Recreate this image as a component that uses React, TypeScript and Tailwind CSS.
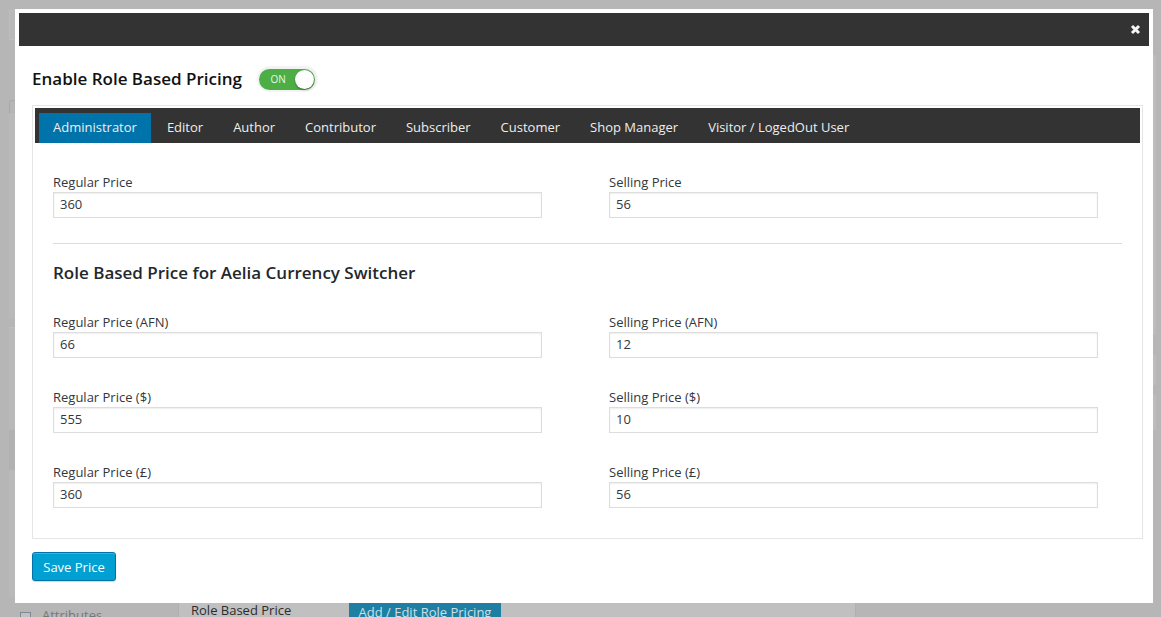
import React from "react";

const tabs = [
  "Administrator",
  "Editor",
  "Author",
  "Contributor",
  "Subscriber",
  "Customer",
  "Shop Manager",
  "Visitor / LogedOut User",
];

function Field({ label, value }: { label: string; value: string }) {
  return (
    <div className="flex flex-col">
      <div className="h-[19px] leading-[19px] text-[13px] text-[#32373c]">{label}</div>
      <div className="w-[489px] h-[26px] border border-[#dddddd] shadow-[inset_0_1px_2px_rgba(0,0,0,0.07)] bg-white flex items-center pl-[6px] text-[13px] text-[#32373c]">
        {value}
      </div>
    </div>
  );
}

function Row({ l, lv, r, rv, className }: { l: string; lv: string; r: string; rv: string; className?: string }) {
  return (
    <div className={"flex " + (className ?? "")}>
      <div className="w-[556px]">
        <Field label={l} value={lv} />
      </div>
      <div>
        <Field label={r} value={rv} />
      </div>
    </div>
  );
}

export default function App() {
  return (
    <div
      className="relative w-[1161px] h-[617px] overflow-hidden bg-[#b6b6b6]"
      style={{ fontFamily: '"Open Sans", "Noto Sans", sans-serif' }}
    >
      {/* faint background page */}
      <div className="absolute left-[9px] top-[10px] w-[10px] h-[30px] border border-[#bebebe] bg-[#b9b9b9]" />
      <div className="absolute left-[9px] top-[100px] w-[10px] h-[30px] rounded-[3px] border border-[#a9a9a9]" />
      <div className="absolute left-[9px] top-[114px] w-[8px] h-[204px] bg-[#b9b9b9] border-t border-[#bebebe]" />
      <div className="absolute left-[9px] top-[327px] w-[8px] h-[270px] bg-[#b9b9b9] border-t border-[#bebebe]" />
      <div className="absolute left-[9px] top-[430px] w-[8px] h-[40px] bg-[#b1b1b1]" />
      <div className="absolute left-[1153px] top-[55px] w-[3px] h-[280px] bg-[#bcbcbc]" />
      <div className="absolute left-[1153px] top-[355px] w-[3px] h-[30px] bg-[#bcbcbc]" />
      <div className="absolute left-[1153px] top-[395px] w-[3px] h-[35px] bg-[#bcbcbc]" />

      {/* bottom strip */}
      <div className="absolute left-0 top-[603px] w-[1161px] h-[14px] flex">
        <div className="w-[178px] h-full bg-[#b6b6b6] relative">
          <div className="absolute left-[20px] top-[9px] w-[11px] h-[11px] border border-[#7e8993] bg-[#c0c0c0]" />
          <div className="absolute left-[42px] top-[3px] text-[13px] text-[#777]">Attributes</div>
        </div>
        <div className="w-[677px] h-full bg-[#c0c0c0] border-l border-[#b0b0b0] relative">
          <div className="absolute left-[12px] top-[-2px] text-[13px] leading-[18px] text-[#2c2c2c]">Role Based Price</div>
          <div className="absolute left-[170px] top-0 w-[152px] h-[16px] bg-[#1d7fa1] text-[13px] leading-[18px] text-[#cde0e8] text-center">
            Add / Edit Role Pricing
          </div>
        </div>
        <div className="flex-1 h-full bg-[#b6b6b6] border-l border-[#b0b0b0]" />
      </div>

      {/* modal */}
      <div className="absolute left-[15px] top-[9px] w-[1138px] h-[594px] bg-white p-[4px] flex flex-col">
        <div className="h-[33px] w-[1130px] bg-[#333333] flex items-center justify-end pr-[8px]">
          <svg width="11" height="11" viewBox="0 0 11 11">
            <path d="M2 2 L9 9 M9 2 L2 9" stroke="#f5f5f5" strokeWidth="3" strokeLinecap="butt" />
          </svg>
        </div>

        <div className="pl-[13px] flex flex-col">
          <div className="flex items-center mt-[21px] h-[24px]">
            <div className="text-[17px] font-semibold text-[#111]">Enable Role Based Pricing</div>
            <div className="ml-[16px] w-[59px] h-[24px] rounded-full bg-[#f2f2f2] shadow-[0_0_2px_rgba(0,0,0,0.15)] flex items-center justify-center">
              <div className="w-[56px] h-[21px] rounded-full bg-[#4cae45] relative flex items-center">
                <span className="ml-[11px] text-[10px] text-[#eaf6e8] leading-none">ON</span>
                <div className="absolute right-[1px] top-[1px] w-[19px] h-[19px] rounded-full bg-white shadow-[0_1px_2px_rgba(0,0,0,0.35)]" />
              </div>
            </div>
          </div>

          <div className="mt-[14px] w-[1111px] h-[434px] border border-[#e5e5e5] p-[2px] flex flex-col">
            <div className="h-[35px] bg-[#333333] flex items-end pl-[4px]">
              {tabs.map((t, i) => (
                <div
                  key={t}
                  className={
                    "h-[30px] flex items-center px-[14px] text-[13px] text-[#eeeeee] " +
                    (i === 0 ? "bg-[#0073aa]" : "ml-[2px]")
                  }
                >
                  {t}
                </div>
              ))}
            </div>

            <div className="pl-[18px] pt-[30px] flex flex-col">
              <Row l="Regular Price" lv="360" r="Selling Price" rv="56" />
              <div className="mt-[25px] w-[1069px] h-[1px] bg-[#dddddd]" />
              <div className="mt-[17px] h-[24px] leading-[24px] text-[17px] font-semibold text-[#23282d]">
                Role Based Price for Aelia Currency Switcher
              </div>
              <Row className="mt-[28px]" l="Regular Price (AFN)" lv="66" r="Selling Price (AFN)" rv="12" />
              <Row className="mt-[30px]" l="Regular Price ($)" lv="555" r="Selling Price ($)" rv="10" />
              <Row className="mt-[30px]" l="Regular Price (£)" lv="360" r="Selling Price (£)" rv="56" />
            </div>
          </div>

          <div className="mt-[13px]">
            <button className="h-[29px] w-[84px] rounded-[3px] bg-[#00a0d2] border border-[#0073aa] shadow-[inset_0_1px_0_rgba(120,200,230,0.5),0_1px_0_rgba(0,0,0,0.15)] text-white text-[13px] leading-[26px]">
              Save Price
            </button>
          </div>
        </div>
      </div>
    </div>
  );
}
